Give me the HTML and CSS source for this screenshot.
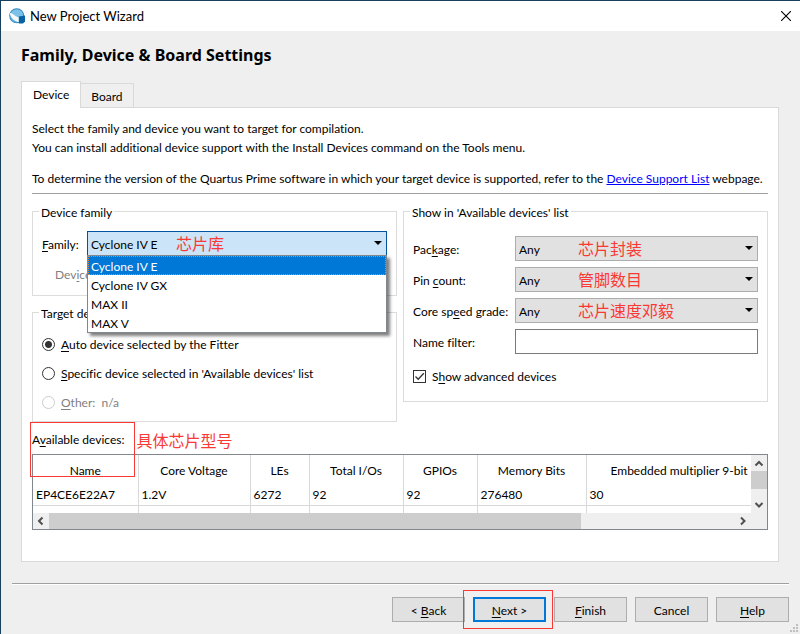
FILE: index.html
```html
<!DOCTYPE html>
<html lang="en">
<head>
<meta charset="utf-8">
<title>New Project Wizard</title>
<link rel="stylesheet" href="styles.css">
</head>
<body>
<div class="dialog">
  <header class="titlebar">
    <svg class="app-icon" viewBox="0 0 17 17" aria-hidden="true">
      <circle cx="7.7" cy="7.7" r="7.5" fill="#2f86bd"/>
      <circle cx="7.7" cy="7.7" r="6.500" fill="#7cc1e8"/>
      <path d="M.8 5C3.500 4.500 6 8.500 10 9.500L10 14C5 13.500 1.500 10 .8 5Z" fill="#f4f9fc"/>
      <path d="M1 7.500C2.500 11 5.500 13 9 14.500C4.500 15 1.500 12 1 7.500Z" fill="#5aaedd"/>
      <path d="M9.800 8.500L16 7.500V13.500L14 15.500H9.800Z" fill="#0a63a0"/>
    </svg>
    <span class="titlebar-text">New Project Wizard</span>
    <button class="close" type="button" aria-label="Close">
      <svg viewBox="0 0 10 10" aria-hidden="true"><path d="M0 0L10 10M10 0L0 10" stroke="#000" stroke-width="1.1"/></svg>
    </button>
  </header>

  <main class="content">
    <h1>Family, Device &amp; Board Settings</h1>
    <div class="tabs" role="tablist">
      <button class="tab tab-active" type="button" role="tab" aria-selected="true">Device</button>
      <button class="tab" type="button" role="tab" aria-selected="false">Board</button>
    </div>
    <section class="panel">
      <div class="intro">
        <p>Select the family and device you want to target for compilation.</p>
        <p>You can install additional device support with the Install Devices command on the Tools menu.</p>
        <p class="intro-last">To determine the version of the Quartus Prime software in which your target device is supported, refer to the <a href="#">Device Support List</a> webpage.</p>
      </div>

      <div class="groups">
        <div class="group-column">
          <fieldset class="group family-group">
            <legend>Device family</legend>
            <div class="family-row">
              <label for="family"><u>F</u>amily:</label>
              <div class="combo">
                <select id="family" class="select-open">
                  <option>Cyclone IV E</option>
                  <option>Cyclone IV GX</option>
                  <option>MAX II</option>
                  <option>MAX V</option>
                </select>
                <svg class="arrow" viewBox="0 0 8 4" aria-hidden="true"><path d="M0 0H8L4 4Z"/></svg>
                <span class="note note-family">芯片库</span>
                <ul class="menu" role="listbox" aria-label="Family">
                  <li class="selected" role="option" aria-selected="true">Cyclone IV E</li>
                  <li role="option">Cyclone IV GX</li>
                  <li role="option">MAX II</li>
                  <li role="option">MAX V</li>
                </ul>
              </div>
            </div>
            <div class="device-row">Dev<u>i</u>ce</div>
          </fieldset>
          <fieldset class="group target-group">
            <legend>Target device</legend>
            <label class="choice"><input type="radio" name="target" checked><span><u>A</u>uto device selected by the Fitter</span></label>
            <label class="choice"><input type="radio" name="target"><span><u>S</u>pecific device selected in 'Available devices' list</span></label>
            <label class="choice disabled"><input type="radio" name="target" disabled><span><u>O</u>ther:&nbsp; n/a</span></label>
          </fieldset>
        </div>

        <fieldset class="group filter-group">
          <legend>Show in 'Available devices' list</legend>
          <div class="filters">
            <label for="package">Pac<u>k</u>age:</label>
            <div class="combo">
              <select id="package"><option>Any</option></select>
              <svg class="arrow" viewBox="0 0 8 4" aria-hidden="true"><path d="M0 0H8L4 4Z"/></svg>
              <span class="note note-filter">芯片封装</span>
            </div>
            <label for="pins">Pin <u>c</u>ount:</label>
            <div class="combo">
              <select id="pins"><option>Any</option></select>
              <svg class="arrow" viewBox="0 0 8 4" aria-hidden="true"><path d="M0 0H8L4 4Z"/></svg>
              <span class="note note-filter">管脚数目</span>
            </div>
            <label for="speed">Core sp<u>e</u>ed grade:</label>
            <div class="combo">
              <select id="speed"><option>Any</option></select>
              <svg class="arrow" viewBox="0 0 8 4" aria-hidden="true"><path d="M0 0H8L4 4Z"/></svg>
              <span class="note note-filter">芯片速度邓毅</span>
            </div>
            <label for="filter">Name filter:</label>
            <input id="filter" class="textbox" type="text">
          </div>
          <label class="choice check"><input type="checkbox" checked><svg class="tick" viewBox="0 0 13 13" aria-hidden="true"><path d="M2.500 6.500L5.200 9.200L10.800 3.200"/></svg><span>S<u>h</u>ow advanced devices</span></label>
        </fieldset>
      </div>

      <div class="available">
        <div class="available-head">
          <span id="available-label">A<u>v</u>ailable devices:</span>
          <span class="note-inline">具体芯片型号</span>
        </div>
        <span class="mark mark-name"></span>
        <div class="grid-frame">
          <div class="grid-view">
            <table aria-labelledby="available-label">
              <colgroup><col class="c-name"><col class="c-volt"><col class="c-les"><col class="c-total"><col class="c-gpio"><col class="c-mem"><col></colgroup>
              <thead>
                <tr><th>Name</th><th>Core Voltage</th><th>LEs</th><th>Total I/Os</th><th>GPIOs</th><th>Memory Bits</th><th class="th-last">Embedded multiplier 9-bit</th></tr>
              </thead>
              <tbody>
                <tr><td>EP4CE6E22A7</td><td>1.2V</td><td>6272</td><td>92</td><td>92</td><td>276480</td><td>30</td></tr>
                <tr class="next-row"><td></td><td></td><td></td><td></td><td></td><td></td><td></td></tr>
              </tbody>
            </table>
          </div>
          <div class="vscroll">
            <svg viewBox="0 0 16 16" aria-hidden="true"><path d="M4.500 10.500L8 7L11.500 10.500"/></svg>
            <div class="vthumb"></div>
            <svg viewBox="0 0 16 16" aria-hidden="true"><path d="M4.500 6L8 9.500L11.500 6"/></svg>
          </div>
          <div class="hscroll">
            <svg viewBox="0 0 16 16" aria-hidden="true"><path d="M9.500 4.500L6 8L9.500 11.500"/></svg>
            <div class="htrack"><div class="hthumb"></div></div>
            <svg viewBox="0 0 16 16" aria-hidden="true"><path d="M6 4.500L9.500 8L6 11.500"/></svg>
          </div>
          <div class="corner"></div>
        </div>
      </div>
    </section>
  </main>

  <footer class="footer">
    <button type="button">&lt; <u>B</u>ack</button>
    <div class="next-wrap"><button class="primary" type="button"><u>N</u>ext &gt;</button><span class="mark mark-next"></span></div>
    <button type="button"><u>F</u>inish</button>
    <button type="button">Cancel</button>
    <button type="button"><u>H</u>elp</button>
  </footer>
  <svg class="grip" viewBox="0 0 8 8" aria-hidden="true"><path d="M6 0h2v2h-2zM3 3h2v2h-2zM6 3h2v2h-2zM0 6h2v2h-2zM3 6h2v2h-2zM6 6h2v2h-2z" fill="#bfbfbf"/></svg>
</div>
</body>
</html>
```

FILE: styles.css
```css
* { box-sizing: border-box; }

body {
  margin: 0;
  background: #efefef;
  color: #000;
  font: 12px/16px Lato, "Noto Sans CJK SC", sans-serif;
  font-variant-ligatures: none;
}

button, select, input { font: inherit; color: inherit; margin: 0; }
u { text-underline-offset: 2px; }
p { margin: 0; }

.dialog {
  position: relative;
  display: flex;
  flex-direction: column;
  min-height: 100vh;
  border-top: 1px solid #17405f;
  border-left: 1px solid #17405f;
}

/* Title bar */
.titlebar {
  display: flex;
  align-items: center;
  height: 30px;
  padding: 0 9px 0 8px;
  background: #fff;
}
.app-icon { width: 17px; height: 17px; }
.titlebar-text { margin-left: 4px; font-size: 13px; }
.close {
  display: flex;
  margin-left: auto;
  padding: 0;
  border: 0;
  background: none;
}
.close svg { width: 10px; height: 10px; }

/* Tabs and panel */
.content { padding: 14px 21px 0 20px; }
h1 { margin: 0; font-family: "Noto Sans", sans-serif; font-size: 16px; line-height: 20px; font-weight: 700; }
.tabs {
  display: flex;
  align-items: flex-end;
  margin-top: 16px;
}
.tab {
  height: 24px;
  padding: 2px 10px 0;
  border: 1px solid #d9d9d9;
  border-left: 0;
  border-bottom: 0;
  background: #efefef;
}
.tab-active {
  position: relative;
  height: 27px;
  margin-bottom: -1px;
  padding: 0 11px;
  border-left: 1px solid #d9d9d9;
  background: #fff;
}
.panel {
  padding: 11px 10px 31px;
  border: 1px solid #d9d9d9;
  background: #fff;
}
.intro { padding-bottom: 5px; border-bottom: 1px solid #a0a0a0; }
.intro p { line-height: 19px; white-space: nowrap; }
.intro .intro-last { margin-top: 12px; }
a { color: #00f; }

/* Group boxes */
.groups {
  display: grid;
  grid-template-columns: 1fr 1fr;
  gap: 6px;
  align-items: start;
  margin-top: 8px;
}
.group {
  min-width: 0;
  margin: 0;
  padding: 0 9px;
  border: 1px solid #dcdcdc;
}
legend { margin-left: -3px; padding: 3px 2px 0; line-height: 16px; }
.family-group { height: 94px; padding-top: 10px; }
.target-group { height: 119px; margin-top: 7px; padding-top: 8px; }
.filter-group { height: 200px; padding-top: 15px; }
.family-row {
  display: grid;
  grid-template-columns: 45px 1fr;
  align-items: center;
}
.family-row label, .filters label { padding-top: 2px; white-space: nowrap; }
.device-row { margin: 11px 0 0 13px; color: #808080; }

.combo { position: relative; display: flex; }
select {
  appearance: none;
  width: 100%;
  height: 25px;
  padding: 2px 3px 0;
  border: 1px solid #adadad;
  border-radius: 0;
  background: #e1e1e1;
}
.select-open {
  border-color: #0054a0;
  background: #cce4f7;
}
.arrow {
  position: absolute;
  top: 10px;
  right: 5px;
  width: 8px;
  height: 4px;
  pointer-events: none;
}
.note, .note-inline {
  color: #fa3934;
  font-family: "Noto Sans CJK SC", sans-serif;
  font-size: 16px;
  line-height: 20px;
}
.note { position: absolute; top: 2px; pointer-events: none; }
.note-family { left: 89px; }
.note-filter { left: 63px; }

.menu {
  position: absolute;
  z-index: 2;
  top: calc(100% - 1px);
  left: 0;
  right: 0;
  margin: 0;
  padding: 0;
  border: 1px solid #82878f;
  background: #fff;
  box-shadow: 3px 3px 3px rgba(0, 0, 0, 0.5);
  list-style: none;
}
.menu li { height: 19px; padding: 3px 3px 0; }
.menu .selected {
  background: #0078d7;
  color: #fff;
  outline: 1px dotted #e08a3c;
  outline-offset: -1px;
}

.choice { position: relative; display: flex; align-items: center; gap: 6px; height: 29px; }
.choice input { appearance: none; flex: none; width: 13px; height: 13px; border: 1px solid #333; background: #fff; }
.choice input[type="radio"] { border-radius: 50%; }
.choice input[type="radio"]:checked { background: radial-gradient(circle, #333 3px, #fff 4px); }
.disabled { color: #808080; }
.choice.disabled input { border-color: #ccc; }
.filters {
  display: grid;
  grid-template-columns: 96px 1fr;
  gap: 6px;
  align-items: center;
}
.textbox { width: 100%; height: 25px; border: 1px solid #7a7a7a; background: #fff; }
.check { margin-top: 8px; }
.tick {
  position: absolute;
  left: 0;
  width: 13px;
  height: 13px;
  fill: none;
  stroke: #333;
  stroke-width: 1.3;
}

/* Device table */
.available { position: relative; margin-top: 7px; }
.available-head { display: flex; align-items: center; gap: 12px; height: 25px; padding-bottom: 4px; }
.mark { position: absolute; border: 1px solid #fa3934; pointer-events: none; }
.mark-name { z-index: 1; top: -7px; left: -2px; width: 105px; height: 55px; }
.grid-frame {
  display: grid;
  grid-template-columns: minmax(0, 1fr) 16px;
  grid-template-rows: 58px 16px;
  border: 1px solid #82878f;
}
.grid-view { overflow: hidden; }
table { width: 100%; border-collapse: collapse; table-layout: fixed; }
.c-name { width: 105px; }
.c-volt { width: 112px; }
.c-les { width: 59px; }
.c-total { width: 94px; }
.c-gpio { width: 74px; }
.c-mem { width: 109px; }
th, td { padding: 0 3px; border-right: 1px solid #d9d9d9; white-space: nowrap; }
th { height: 28px; padding-top: 3px; font-weight: 400; }
th:last-child, td:last-child { border-right: 0; }
.th-last { padding-left: 24px; padding-right: 0; text-align: left; }
td { height: 22px; padding-top: 2px; border-bottom: 1px solid #d9d9d9; }
.next-row td { height: 12px; }
.vscroll { display: flex; flex-direction: column; background: #efefef; }
.vthumb { height: 18px; background: #cdcdcd; }
.vscroll svg, .hscroll svg { flex: none; width: 16px; height: 16px; fill: none; stroke: #505050; stroke-width: 2; }
.vscroll svg:last-child { margin-top: auto; }
.hscroll { display: flex; background: #efefef; }
.htrack { flex: 1; }
.hthumb { width: 77.5%; height: 100%; background: #cdcdcd; }
.corner { background: #efefef; }

/* Footer */
.footer {
  display: flex;
  justify-content: flex-end;
  gap: 8px;
  margin: 21px 11px 0;
  padding-top: 13px;
  border-top: 1px solid #a0a0a0;
  box-shadow: inset 0 1px #fff;
}
.footer button {
  width: 73px;
  height: 25px;
  padding: 2px 0 0;
  border: 1px solid #adadad;
  background: #e1e1e1;
}
.next-wrap { position: relative; display: flex; }
.footer .primary { border: 2px solid #0078d7; padding: 2px 0 0; }
.mark-next { top: -7px; left: -10px; width: 90px; height: 39px; }
.grip { position: absolute; right: 2px; bottom: 2px; width: 8px; height: 8px; }
```
